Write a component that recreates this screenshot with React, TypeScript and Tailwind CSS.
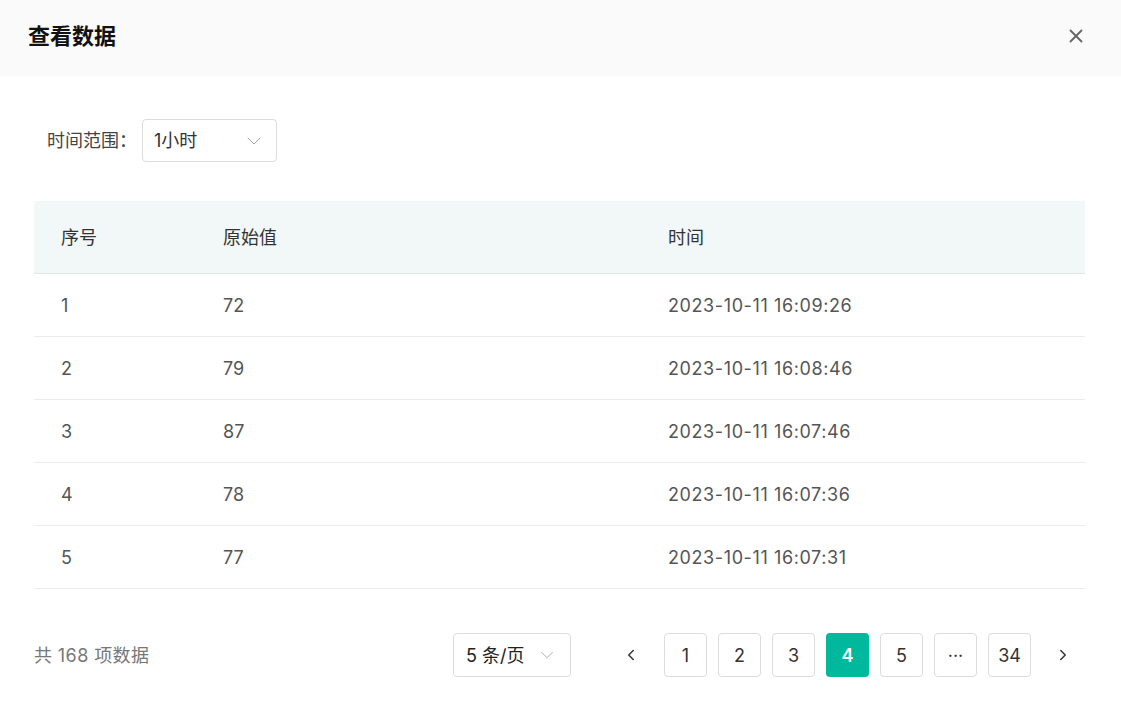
import { ChevronDown, ChevronLeft, ChevronRight, X } from "lucide-react";

const rows = [
  { id: 1, value: 72, time: "2023-10-11 16:09:26" },
  { id: 2, value: 79, time: "2023-10-11 16:08:46" },
  { id: 3, value: 87, time: "2023-10-11 16:07:46" },
  { id: 4, value: 78, time: "2023-10-11 16:07:36" },
  { id: 5, value: 77, time: "2023-10-11 16:07:31" },
];

const pages = ["1", "2", "3", "4", "5", "···", "34"];

export default function App() {
  return (
    <div
      className="h-[724px] w-[1121px] bg-white"
      style={{ fontFamily: 'Inter, "Noto Sans CJK SC", sans-serif' }}
    >
      <header className="flex h-[76px] items-center justify-between bg-[#fafafa] pb-[4px] pl-[28px] pr-[34px]">
        <h1 className="text-[22px] font-bold text-[#111]">查看数据</h1>
        <X className="h-[22px] w-[22px] text-[#666]" strokeWidth={2} />
      </header>

      <div className="pl-[34px] pr-[36px]">
        <div className="mt-[43px] flex items-center pl-[13px]">
          <span className="w-[95px] text-[18px] text-[#444]">时间范围：</span>
          <div className="flex h-[43px] w-[135px] items-center justify-between rounded-[4px] border border-[#dcdcdc] pl-[11px] pr-[10px]">
            <span className="text-[18px] text-[#333]">1小时</span>
            <ChevronDown className="h-[24px] w-[24px] text-[#aaa]" strokeWidth={1} />
          </div>
        </div>

        <div className="mt-[39px]">
          <div className="flex h-[73px] items-center border-b border-[#e3e6e6] bg-[#f2f7f7] text-[18px] text-[#333]">
            <div className="w-[189px] pl-[27px]">序号</div>
            <div className="w-[445px]">原始值</div>
            <div>时间</div>
          </div>
          {rows.map((r) => (
            <div key={r.id} className="flex h-[63px] items-center border-b border-[#ebebeb] text-[18px] text-[#555]">
              <div className="w-[189px] pl-[27px]">{r.id}</div>
              <div className="w-[445px]">{r.value}</div>
              <div className="tracking-[0.6px]">{r.time}</div>
            </div>
          ))}
        </div>

        <div className="mt-[44px] flex items-center">
          <span className="w-[419px] shrink-0 text-[18px] tracking-[0.4px] text-[#777]">共 168 项数据</span>
          <div className="flex h-[44px] w-[118px] shrink-0 items-center justify-between rounded-[4px] border border-[#dcdcdc] pl-[12px] pr-[12px]">
            <span className="text-[18px] text-[#222]">5 条/页</span>
            <ChevronDown className="h-[22px] w-[22px] text-[#aaa]" strokeWidth={1} />
          </div>
          <div className="ml-[38px] flex shrink-0 items-center gap-[11px]">
            <div className="flex h-[44px] w-[44px] items-center justify-center">
              <ChevronLeft className="h-[18px] w-[18px] text-[#333]" strokeWidth={2} />
            </div>
            {pages.map((p) => (
              <div
                key={p}
                className={
                  p === "4"
                    ? "flex h-[44px] w-[43px] items-center justify-center rounded-[4px] bg-[#00b89c] text-[18px] font-semibold text-white"
                    : "flex h-[44px] w-[43px] items-center justify-center rounded-[4px] border border-[#dcdcdc] text-[18px] text-[#333]"
                }
              >
                {p}
              </div>
            ))}
            <div className="flex h-[44px] w-[42px] items-center justify-center">
              <ChevronRight className="h-[18px] w-[18px] text-[#333]" strokeWidth={2} />
            </div>
          </div>
        </div>
      </div>
    </div>
  );
}
